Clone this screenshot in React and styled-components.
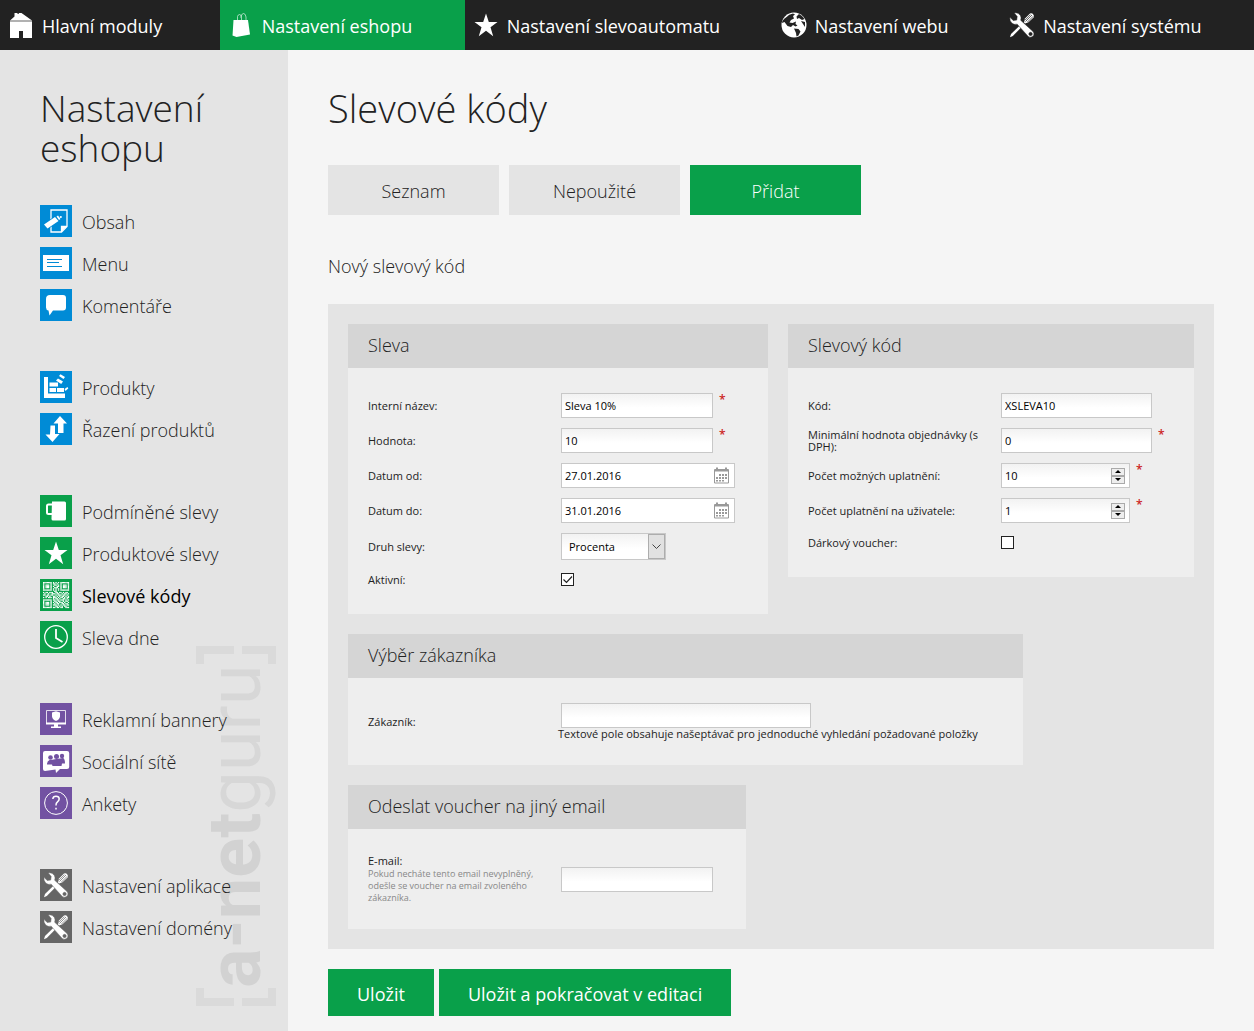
import * as React from "react";
import styled, { createGlobalStyle } from "styled-components";

const GREEN = "#09a04a";
const BLUE = "#008bd6";
const PURPLE = "#7252a2";
const GRAY = "#666";

const GlobalStyle = createGlobalStyle`
  * {
    box-sizing: border-box;
  }
  body {
    margin: 0;
    background: #f5f5f5;
    color: #222;
    font-family: "Open Sans", "Noto Sans", sans-serif;
    font-size: 11px;
  }
  input, select, button {
    font: inherit;
    color: inherit;
  }
`;

const TopBar = styled.nav`
  display: flex;
  height: 50px;
  background: #222;
`;

const TopLink = styled.a`
  flex: 1 1 auto;
  display: flex;
  align-items: center;
  gap: 5px;
  padding: 0 0 0 5px;
  background: ${(p) => (p.$active ? GREEN : "transparent")};
  color: #fff;
  font-size: 18px;
  line-height: 24px;
  white-space: nowrap;
  text-decoration: none;
  &:first-child {
    padding-right: 5px;
  }
  span {
    padding-top: 2px;
  }
`;

const Layout = styled.div`
  display: flex;
  align-items: stretch;
  min-height: calc(100vh - 50px);
`;

const Sidebar = styled.aside`
  position: relative;
  flex: 0 0 288px;
  padding: 38px 40px 0;
  background: #e4e4e4;
`;

const Watermark = styled.svg`
  position: absolute;
  right: 11px;
  bottom: 24px;
`;

const Title = styled.h1`
  margin: 0;
  font-size: 38px;
  line-height: 40px;
  font-weight: 300;
`;

const SideTitle = styled(Title)`
  font-size: 37px;
`;

const MenuGroups = styled.div`
  position: relative;
  display: flex;
  flex-direction: column;
  gap: 50px;
  margin-top: 37px;
`;

const MenuGroup = styled.ul`
  display: flex;
  flex-direction: column;
  gap: 10px;
  margin: 0;
  padding: 0;
  list-style: none;
`;

const MenuLink = styled.a`
  display: flex;
  align-items: center;
  gap: 10px;
  height: 32px;
  color: ${(p) => (p.$active ? "#000" : "#222")};
  font-size: 18px;
  line-height: 24px;
  font-weight: ${(p) => (p.$active ? 400 : 300)};
  white-space: nowrap;
  text-decoration: none;
  span {
    padding-top: 2px;
  }
`;

const Tile = styled.svg`
  flex: none;
  background: ${(p) => p.$bg || "transparent"};
`;

const Main = styled.main`
  flex: 1;
  min-width: 0;
  padding: 38px 40px 15px;
`;

const Tabs = styled.div`
  display: flex;
  flex-wrap: wrap;
  gap: 10px;
  margin-top: 37px;
`;

const Tab = styled.button`
  width: 171px;
  height: 50px;
  padding: 2px 0 0;
  border: 0;
  background: ${(p) => (p.$active ? GREEN : "#e4e4e4")};
  color: ${(p) => (p.$active ? "#fff" : "#222")};
  font-size: 18px;
  font-weight: 300;
`;

const SubTitle = styled.h2`
  margin: 39px 0 25px;
  font-size: 18px;
  line-height: 25px;
  font-weight: 300;
`;

const Panel = styled.div`
  display: flex;
  flex-wrap: wrap;
  align-items: flex-start;
  gap: 20px;
  padding: 20px;
  background: #e4e4e4;
`;

const CardBox = styled.section`
  width: ${(p) => p.$width}px;
  max-width: 100%;
  background: #eee;
`;

const CardTitle = styled.h3`
  margin: 0;
  padding: 0 20px 2px;
  background: #d5d5d5;
  font-size: 18px;
  line-height: 42px;
  font-weight: 300;
`;

const CardBody = styled.div`
  padding: 20px;
`;

const Row = styled.div`
  display: flex;
  align-items: center;
  min-height: 29px;
  padding: 5px 0;
`;

const LabelCell = styled.div`
  flex: 0 0 190px;
  padding-right: 8px;
  line-height: 12px;
`;

const Note = styled.small`
  display: block;
  color: #888;
  font-size: 9px;
  line-height: 12px;
`;

const EmailLabel = styled.label`
  display: block;
  line-height: 14px;
`;

const Control = styled.div`
  display: flex;
  align-items: flex-start;
  gap: 6px;
  margin-left: 3px;
`;

const Required = styled.span`
  color: #c22;
  font-size: 12px;
  line-height: 14px;
  font-weight: 600;
`;

const Frame = styled.div`
  position: relative;
  display: flex;
  align-items: center;
  width: ${(p) => p.$width}px;
  height: ${(p) => p.$height || 25}px;
  border: 1px solid #c8c8c8;
  background: ${(p) =>
    p.$flat ? "#fff" : "linear-gradient(#f2f2f2, #fff 60%)"};
`;

const Field = styled.input`
  flex: 1;
  min-width: 0;
  height: 100%;
  padding: 0 3px;
  border: 0;
  background: transparent;
  color: #000;
  outline: none;
  appearance: textfield;
  &::-webkit-inner-spin-button {
    appearance: none;
  }
`;

const Select = styled.select`
  width: 100%;
  height: 100%;
  padding: 0 20px 0 7px;
  border: 0;
  background: transparent;
  color: #000;
  appearance: none;
`;

const SelectArrow = styled.span`
  position: absolute;
  top: 0;
  right: 0;
  bottom: 0;
  display: grid;
  place-items: center;
  width: 17px;
  border: 1px solid #adadad;
  background: #e1e1e1;
  pointer-events: none;
`;

const CalendarButton = styled.button`
  display: flex;
  padding: 0;
  margin-right: 4px;
  border: 0;
  background: none;
`;

const Spinner = styled.span`
  display: flex;
  flex-direction: column;
  width: 14px;
  margin-right: 4px;
`;

const SpinButton = styled.button`
  display: grid;
  place-items: center;
  height: 8px;
  padding: 0;
  border: 1px solid #aaa;
  background: #eee;
`;

const CheckWrap = styled.span`
  position: relative;
  display: flex;
  svg {
    position: absolute;
    top: 0;
    left: 0;
    pointer-events: none;
  }
`;

const Check = styled.input`
  width: 13px;
  height: 13px;
  margin: 0;
  border: 1px solid #222;
  background: #fff;
  appearance: none;
  & + svg {
    display: none;
  }
  &:checked + svg {
    display: block;
  }
`;

const Whisper = styled.div`
  line-height: 12px;
  white-space: nowrap;
`;

const Actions = styled.div`
  display: flex;
  flex-wrap: wrap;
  gap: 5px;
  margin-top: 20px;
`;

const Action = styled.button`
  height: 47px;
  padding: 3px 29px 0;
  border: 0;
  background: ${GREEN};
  color: #fff;
  font-size: 18px;
`;

const STAR =
  "M16 4.5l2.8 8.4h8.7l-7 5.3 2.7 9.1-7.2-5.6-7.2 5.6 2.7-9.1-7-5.3h8.7z";

const QR_ROWS = [
  "111111101010101111111",
  "100000101101001000001",
  "101110100110101011101",
  "101110101001101011101",
  "101110100111001011101",
  "100000101010101000001",
  "111111101010101111111",
  "000000000110000000000",
  "101101110011011010110",
  "010010011101100101101",
  "110110110010111011010",
  "001101001101010110101",
  "101011101110101101011",
  "000000001011010011010",
  "111111101101101110101",
  "100000100110110010110",
  "101110101011011101001",
  "101110100101100110110",
  "101110101110101011011",
  "100000100011010101100",
  "111111101101101100111",
];

const glyphs = {
  home: (
    <>
      <path d="M5 11.500 9.500 7.500V4h3v1h1l.5-1h2.500L27 11.500z" />
      <path d="M5 11.500h22v1H5z" opacity=".6" />
      <path d="M5 12.500h22V29h-9v-7h-4v7H5z" />
    </>
  ),
  bag: (
    <>
      <path d="M8.500 11h14.500l2 14.500-13.500 2.500-4-1.500z" />
      <path
        d="M12.500 11V7.500q.5-2 2-2t2 2V11m-1-2.500q1-4 3-4t2.500 3.500v3"
        fill="none"
        stroke="#fff"
        opacity=".6"
      />
    </>
  ),
  star: <path d={STAR} />,
  globe: (
    <>
      <circle cx="16" cy="16" r="12.500" />
      <path
        fill="#222"
        d="M8 8.500q3-3.500 7-4l2 1-2 1.500 1 2.500-3 1.500-1.500 2.500 3 .5 3.500-1.500-.5 2.500 2 1.500-2 1-2.500-1.500-2 2-3.500-1-3-4-2.500 1q0-3 4-5.500zM21 5q4 2 5.500 5l-2.500 1-3-2-2 1-.5-2.500zM23 12l4 1v5l-2-3zM16 19.500l4.500.5 2 2.500-2 4-2 1-.5-3.500z"
      />
    </>
  ),
  tools: (
    <>
      <path d="M4 28.300l1-3.200 8.500-8.300 1.700 1.700-8.400 8.400z" />
      <path d="M18 13.500 19 9.500l5-5q2-.8 3.500 1.200 1 1.500 0 2.800l-5 4.800-3.500 1.200z" />
      <path
        d="M19.500 12.500 26 6M18.800 11.300 24.500 5.600M21.500 13 27.200 7.300"
        fill="none"
        stroke="currentColor"
        strokeWidth=".7"
      />
      <path
        fillRule="evenodd"
        stroke="currentColor"
        strokeWidth=".5"
        d="M8.200 4q4.300-.8 6.300 2.700 1 2 .2 4.600L27 22.500q2 2.500 0 4.700-2.500 2.200-4.800.2L11.200 15.200q-3.200.9-5.500-1.200Q3.300 11.600 4 8.300l3.200 3.200 3.500-.4.500-3.700zM24.500 23.300a1.700 1.700 0 1 0 .1 0z"
      />
    </>
  ),
  content: (
    <>
      <path
        d="M11 5h16v16.500L21.500 27H11V5zM21.500 27v-5.500H27"
        fill="none"
        stroke="#fff"
        strokeWidth="1.300"
      />
      <path d="M21 27v-6h6z" />
      <path
        d="m4 19.500 11-7.500 3.500 4L7.500 23.500zM16.500 11.500l1.500-1 2.500 3.500-1.500 1z"
        stroke={BLUE}
        strokeWidth="1.500"
        paintOrder="stroke"
      />
      <circle cx="20.800" cy="12" r="1.100" />
    </>
  ),
  menu: (
    <>
      <path d="M3 8h26v16H3z" />
      <path d="M7 12.500h15M7 15.500h12M7 19.500h15" stroke={BLUE} strokeWidth="1" />
    </>
  ),
  comment: (
    <path d="M10 6h13q3 0 3 3v9.500q0 3-3 3H13L9.500 26.500 8.500 21.500Q6 21 6 18.500V10q0-4 4-4z" />
  ),
  products: (
    <>
      <path d="M4 6h4v16.500h17V27H4z" />
      <path d="M9.500 11.500h8.500v4H9.500zM9.500 17h6.500v4H9.500zM17 17h7v4h-7zM24.500 18l3-2 .8 1.500-2.800 2.500zM16 9.500l2-2 5 3-1.800 2.500zM19 5l1.500-1.800L25 6l-1.500 2z" />
    </>
  ),
  sort: (
    <path d="M20 3l7 7.500h-3.500V20h-5.500v-9.500h-4.500zM10.500 12.500H15V21h4.500L12.500 29 5.500 21.500h4.500z" />
  ),
  mug: (
    <>
      <path d="M12 6.500h12.500q1.500 0 1.500 1.500v16q0 1.500-1.500 1.500H13q-1.500 0-1.500-1.500z" />
      <path
        d="M12 9.500H8.500Q7 9.500 7 11v6.500Q7 19 8.500 19H12"
        fill="none"
        stroke="#fff"
        strokeWidth="2"
      />
    </>
  ),
  qr: (
    <g transform="translate(3 3) scale(1.24)">
      {QR_ROWS.map((row, y) =>
        row
          .split("")
          .map((bit, x) =>
            bit === "1" ? (
              <rect key={`${x}-${y}`} x={x} y={y} width="1.050" height="1.050" />
            ) : null
          )
      )}
    </g>
  ),
  clock: (
    <g fill="none" stroke="#fff">
      <circle cx="16" cy="16" r="11.300" strokeWidth="1.300" />
      <path d="M16 8v9l6.500 4" strokeWidth="1.800" />
    </g>
  ),
  monitor: (
    <>
      <path
        d="M6.500 7.500h19v13h-19z"
        fill="none"
        stroke="#fff"
        strokeWidth=".8"
      />
      <path d="M6 19.500h20v2H6zM14 21.500h4v2h3V25H11v-1.500h3zM12 9.500l4-1.200 4 1.200v4q-.5 3-4 4.500-3.500-1.500-4-4.500z" />
    </>
  ),
  social: (
    <>
      <path d="M5 6h22q2.200 0 2.200 2v14q0 2-2.200 2H20l-4 4-.5-3.500L5 26Q3 26 3 24V8q0-2 2-2z" />
      <g fill={PURPLE}>
        <circle cx="10.500" cy="12.500" r="2.300" />
        <circle cx="16.500" cy="11.500" r="2.500" />
        <circle cx="22" cy="11" r="2.200" />
        <path d="M7 19.500q0-3.500 2.500-4.500l3-.3q3.500-1 4.500-.7l6-1q2 .5 2 5.500h-3l-.5 2.500h-9l-.5-1.500z" />
      </g>
    </>
  ),
  help: (
    <g fill="none" stroke="#fff">
      <circle cx="16" cy="16" r="11.400" strokeWidth="1" />
      <path d="M12.800 12q.2-2.800 3.200-2.800t3.200 2.600q0 1.700-1.700 3T16 18.500M16 20.800v1.700" strokeWidth="1.500" />
    </g>
  ),
};

const Glyph = ({ name, bg }) => (
  <Tile
    $bg={bg}
    width="32"
    height="32"
    viewBox="0 0 32 32"
    fill="#fff"
    color={bg || "#222"}
    aria-hidden="true"
  >
    {glyphs[name]}
  </Tile>
);

const topItems = [
  { icon: "home", text: "Hlavní moduly" },
  { icon: "bag", text: "Nastavení eshopu", active: true },
  { icon: "star", text: "Nastavení slevoautomatu" },
  { icon: "globe", text: "Nastavení webu" },
  { icon: "tools", text: "Nastavení systému" },
];

const menu = [
  {
    color: BLUE,
    items: [
      { icon: "content", text: "Obsah" },
      { icon: "menu", text: "Menu" },
      { icon: "comment", text: "Komentáře" },
    ],
  },
  {
    color: BLUE,
    items: [
      { icon: "products", text: "Produkty" },
      { icon: "sort", text: "Řazení produktů" },
    ],
  },
  {
    color: GREEN,
    items: [
      { icon: "mug", text: "Podmíněné slevy" },
      { icon: "star", text: "Produktové slevy" },
      { icon: "qr", text: "Slevové kódy", active: true },
      { icon: "clock", text: "Sleva dne" },
    ],
  },
  {
    color: PURPLE,
    items: [
      { icon: "monitor", text: "Reklamní bannery" },
      { icon: "social", text: "Sociální sítě" },
      { icon: "help", text: "Ankety" },
    ],
  },
  {
    color: GRAY,
    items: [
      { icon: "tools", text: "Nastavení aplikace" },
      { icon: "tools", text: "Nastavení domény" },
    ],
  },
];

const Brand = () => (
  <Watermark width="81" height="362" viewBox="0 0 81 362">
    <g fill="none" stroke="#dadada" strokeWidth="8">
      <path d="M4 19V5h34M46 5h30v14M4 343v14h34M46 357h30v-14" />
    </g>
    <g
      transform="translate(64 343) rotate(-90)"
      fontFamily="Roboto, sans-serif"
      fontSize="74"
    >
      <text fill="#d2d2d2" fontWeight="700">
        a-net
        <tspan fill="#d7d7d7" fontWeight="400">
          guru
        </tspan>
      </text>
    </g>
  </Watermark>
);

const Card = ({ title, width, children }) => (
  <CardBox $width={width}>
    <CardTitle>{title}</CardTitle>
    <CardBody>{children}</CardBody>
  </CardBox>
);

const FormRow = ({ id, label, required, children }) => (
  <Row>
    <LabelCell>
      <label htmlFor={id}>{label}</label>
    </LabelCell>
    <Control>
      {children}
      {required && <Required>*</Required>}
    </Control>
  </Row>
);

const TextRow = ({ id, label, value, width, required }) => (
  <FormRow id={id} label={label} required={required}>
    <Frame $width={width}>
      <Field id={id} type="text" defaultValue={value} />
    </Frame>
  </FormRow>
);

const DateRow = ({ id, label, value }) => (
  <FormRow id={id} label={label}>
    <Frame $width={174} $flat>
      <Field id={id} type="text" defaultValue={value} />
      <CalendarButton type="button" aria-label="Kalendář">
        <svg width="17" height="17" viewBox="0 0 17 17" fill="#999">
          <path
            d="M1.500 2.500h14v13.500h-14z"
            fill="none"
            stroke="#999"
            strokeWidth="1"
          />
          <path d="M2 2.500h13v2H2zM3 .5h2v3H3zM12 .5h2v3h-2z" />
          <path d="M6 7h2v2H6zM9 7h2v2H9zM12 7h2v2h-2zM3 10h2v2H3zM6 10h2v2H6zM9 10h2v2H9zM12 10h2v2h-2zM3 13h2v1.500H3zM6 13h2v1.500H6zM9 13h2v1.500H9z" />
        </svg>
      </CalendarButton>
    </Frame>
  </FormRow>
);

const NumberRow = ({ id, label, value }) => (
  <FormRow id={id} label={label} required>
    <Frame $width={129}>
      <Field id={id} type="number" defaultValue={value} />
      <Spinner>
        <SpinButton type="button" tabIndex={-1} aria-label="Zvýšit">
          <svg width="6" height="3">
            <path d="M3 0l3 3H0z" />
          </svg>
        </SpinButton>
        <SpinButton type="button" tabIndex={-1} aria-label="Snížit">
          <svg width="6" height="3">
            <path d="M0 0h6L3 3z" />
          </svg>
        </SpinButton>
      </Spinner>
    </Frame>
  </FormRow>
);

const CheckRow = ({ id, label, checked }) => (
  <FormRow id={id} label={label}>
    <CheckWrap>
      <Check id={id} type="checkbox" defaultChecked={checked} />
      <svg width="13" height="13" fill="none" stroke="#222">
        <path d="M2.500 6.500l3 3 5.500-6" strokeWidth="1.200" />
      </svg>
    </CheckWrap>
  </FormRow>
);

const App = () => {
  return (
    <>
      <GlobalStyle />
      <TopBar>
        {topItems.map((item) => (
          <TopLink key={item.text} href="#" $active={item.active}>
            <Glyph name={item.icon} />
            <span>{item.text}</span>
          </TopLink>
        ))}
      </TopBar>
      <Layout>
        <Sidebar>
          <Brand />
          <SideTitle as="h2">Nastavení eshopu</SideTitle>
          <MenuGroups>
            {menu.map((group, i) => (
              <MenuGroup key={i}>
                {group.items.map((item) => (
                  <li key={item.text}>
                    <MenuLink href="#" $active={item.active}>
                      <Glyph name={item.icon} bg={group.color} />
                      <span>{item.text}</span>
                    </MenuLink>
                  </li>
                ))}
              </MenuGroup>
            ))}
          </MenuGroups>
        </Sidebar>
        <Main>
          <Title>Slevové kódy</Title>
          <Tabs>
            <Tab type="button">Seznam</Tab>
            <Tab type="button">Nepoužité</Tab>
            <Tab type="button" $active>
              Přidat
            </Tab>
          </Tabs>
          <SubTitle>Nový slevový kód</SubTitle>
          <form onSubmit={(e) => e.preventDefault()}>
            <Panel>
              <Card title="Sleva" width={420}>
                <TextRow
                  id="name"
                  label="Interní název:"
                  value="Sleva 10%"
                  width={152}
                  required
                />
                <TextRow
                  id="value"
                  label="Hodnota:"
                  value="10"
                  width={152}
                  required
                />
                <DateRow id="from" label="Datum od:" value="27.01.2016" />
                <DateRow id="to" label="Datum do:" value="31.01.2016" />
                <FormRow id="kind" label="Druh slevy:">
                  <Frame $width={105} $height={27}>
                    <Select id="kind" defaultValue="Procenta">
                      <option>Procenta</option>
                      <option>Částka</option>
                    </Select>
                    <SelectArrow>
                      <svg width="9" height="6" fill="none" stroke="#444">
                        <path d="M.5.500l4 4 4-4" />
                      </svg>
                    </SelectArrow>
                  </Frame>
                </FormRow>
                <CheckRow id="active" label="Aktivní:" checked />
              </Card>
              <Card title="Slevový kód" width={406}>
                <TextRow id="code" label="Kód:" value="XSLEVA10" width={151} />
                <TextRow
                  id="min"
                  label="Minimální hodnota objednávky (s DPH):"
                  value="0"
                  width={151}
                  required
                />
                <NumberRow
                  id="uses"
                  label="Počet možných uplatnění:"
                  value="10"
                />
                <NumberRow
                  id="userUses"
                  label="Počet uplatnění na uživatele:"
                  value="1"
                />
                <CheckRow id="gift" label="Dárkový voucher:" />
              </Card>
              <Card title="Výběr zákazníka" width={675}>
                <Row>
                  <LabelCell>
                    <label htmlFor="customer">Zákazník:</label>
                  </LabelCell>
                  <div>
                    <Control>
                      <Frame $width={250}>
                        <Field id="customer" type="text" />
                      </Frame>
                    </Control>
                    <Whisper>
                      Textové pole obsahuje našeptávač pro jednoduché vyhledání
                      požadované položky
                    </Whisper>
                  </div>
                </Row>
              </Card>
              <Card title="Odeslat voucher na jiný email" width={398}>
                <Row>
                  <LabelCell>
                    <EmailLabel htmlFor="email">E-mail:</EmailLabel>
                    <Note>
                      Pokud necháte tento email nevyplněný, odešle se voucher na
                      email zvoleného zákazníka.
                    </Note>
                  </LabelCell>
                  <Control>
                    <Frame $width={152}>
                      <Field id="email" type="email" />
                    </Frame>
                  </Control>
                </Row>
              </Card>
            </Panel>
            <Actions>
              <Action type="submit">Uložit</Action>
              <Action type="submit">Uložit a pokračovat v editaci</Action>
            </Actions>
          </form>
        </Main>
      </Layout>
    </>
  );
};

export default App;
